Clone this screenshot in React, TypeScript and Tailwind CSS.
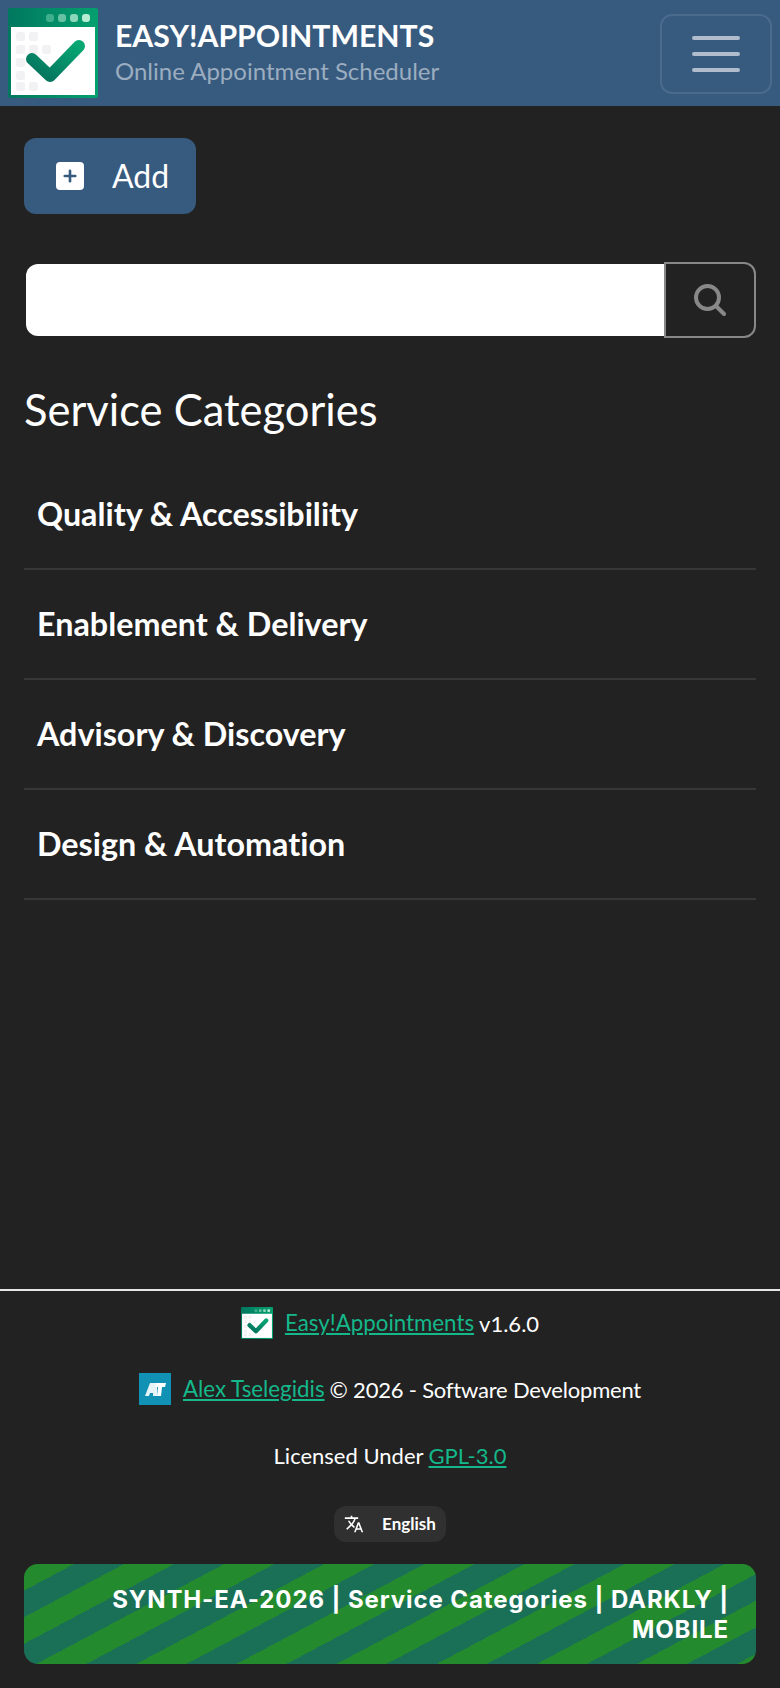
import { Plus } from "lucide-react";
import { MdTranslate } from "react-icons/md";

const categories = [
  "Quality & Accessibility",
  "Enablement & Delivery",
  "Advisory & Discovery",
  "Design & Automation",
];

function Logo({ className, id }: { className: string; id: string }) {
  return (
    <svg viewBox="0 0 90 90" className={className}>
      <defs>
        <linearGradient id={`${id}Bar`} x1="0" y1="0" x2="1" y2="0">
          <stop offset="0" stopColor="#00785f" />
          <stop offset="1" stopColor="#05a06f" />
        </linearGradient>
        <linearGradient id={`${id}Check`} x1="0" y1="1" x2="1" y2="0">
          <stop offset="0" stopColor="#04705c" />
          <stop offset="1" stopColor="#07a673" />
        </linearGradient>
      </defs>
      <rect width="90" height="90" rx="2" fill={`url(#${id}Bar)`} />
      <rect x="3" y="19" width="84" height="68" fill="#ffffff" />
      <g fill="#f2f2f4">
        <rect x="8" y="24" width="9" height="9" rx="2" />
        <rect x="21" y="24" width="9" height="9" rx="2" />
        <rect x="8" y="37" width="9" height="9" rx="2" />
        <rect x="21" y="37" width="9" height="9" rx="2" />
        <rect x="34" y="37" width="9" height="9" rx="2" />
        <rect x="8" y="50" width="9" height="9" rx="2" />
        <rect x="8" y="63" width="9" height="9" rx="2" />
        <rect x="8" y="74" width="9" height="9" rx="2" />
        <rect x="21" y="74" width="9" height="9" rx="2" />
      </g>
      <g>
        <rect x="38" y="6" width="8" height="8" rx="3" fill="#3fae8c" />
        <rect x="50" y="6" width="8" height="8" rx="3" fill="#66c2a3" />
        <rect x="62" y="6" width="8" height="8" rx="3" fill="#8cd6ba" />
        <rect x="74" y="6" width="8" height="8" rx="3" fill="#b5ecd2" />
      </g>
      <path
        d="M24 51 L42 68 L71 38"
        fill="none"
        stroke={`url(#${id}Check)`}
        strokeWidth="12"
        strokeLinecap="round"
        strokeLinejoin="round"
      />
    </svg>
  );
}

function AuthorMark() {
  return (
    <span className="flex h-8 w-8 items-center justify-center bg-[#1191b3]">
      <svg viewBox="0 0 32 32" className="h-8 w-8">
        <path d="M6 23 L11 10 H18 V23 H14 V20 H11 L10 23 Z" fill="#e6f4f8" />
        <path d="M17 10 H27 L26 14 H23 L22 23 H18 L19 14 H16 Z" fill="#ffffff" />
      </svg>
    </span>
  );
}

export default function App() {
  return (
    <div className="relative flex h-[1688px] flex-col overflow-hidden bg-[#222222] font-['Lato','Noto_Sans',sans-serif] text-white [font-variant-ligatures:no-common-ligatures]">
      <header className="flex h-[106px] items-center justify-between bg-[#375a7f] pl-2 pr-2">
        <div className="flex items-center">
          <Logo id="top" className="h-[90px] w-[90px]" />
          <div className="ml-[17px]">
            <div className="text-[30.2px] leading-[34px] font-bold">EASY!APPOINTMENTS</div>
            <div className="mt-[1px] text-[24px] leading-[36px] text-[#9badbf]">Online Appointment Scheduler</div>
          </div>
        </div>
        <button className="mt-[2px] flex h-[80px] w-[112px] flex-col items-center justify-center gap-[12px] rounded-[12px] border-2 border-white/10">
          <span className="h-[4px] w-[48px] rounded bg-[#afbdcc]" />
          <span className="h-[4px] w-[48px] rounded bg-[#afbdcc]" />
          <span className="h-[4px] w-[48px] rounded bg-[#afbdcc]" />
        </button>
      </header>

      <main className="flex-1 px-6">
        <button className="mt-8 flex h-[76px] w-[172px] items-center rounded-[12px] bg-[#375a7f] pl-8">
          <span className="flex h-7 w-7 items-center justify-center rounded-[4px] bg-white">
            <Plus className="h-[18px] w-[18px] text-[#375a7f]" strokeWidth={3.5} />
          </span>
          <span className="ml-7 text-[32px] leading-none">Add</span>
        </button>

        <div className="mt-12 flex items-center pl-[2px]">
          <div className="h-[72px] flex-1 rounded-l-[12px] bg-white" />
          <button className="flex h-[76px] w-[92px] items-center justify-center rounded-r-[12px] border-2 border-[#888888]">
            <svg viewBox="0 0 32 32" className="h-8 w-8" fill="none" stroke="#888888" strokeWidth="4" strokeLinecap="round">
              <circle cx="13.5" cy="13.5" r="11.5" />
              <path d="M22 22 L30 30" />
            </svg>
          </button>
        </div>

        <h1 className="mt-[47px] text-[43.5px] leading-[48px]">Service Categories</h1>

        <ul className="mt-[27px]">
          {categories.map((name) => (
            <li key={name} className="flex h-[110px] items-center border-b-2 border-[#373737] pl-[13px] pr-[14px]">
              <span className="text-[32.3px] font-bold">{name}</span>
            </li>
          ))}
        </ul>
      </main>

      <footer className="flex h-[399px] flex-col items-center border-t-2 border-[#e6e6e6] text-[22px]">
        <div className="mt-[16px] flex h-8 items-center">
          <Logo id="small" className="mr-[12px] h-8 w-8" />
          <a className="text-[22.3px] text-[#14b88a] underline">Easy!Appointments</a>
          <span className="ml-[5px]">v1.6.0</span>
        </div>
        <div className="mt-[34px] flex h-8 items-center">
          <span className="mr-[12px]"><AuthorMark /></span>
          <a className="text-[22.3px] text-[#14b88a] underline">Alex Tselegidis</a>
          <span className="ml-[5px] tracking-[-0.2px]">© 2026 - Software Development</span>
        </div>
        <div className="mt-[34px] flex h-8 items-center">
          <span>Licensed Under</span>
          <a className="ml-[5px] text-[#14b88a] underline">GPL-3.0</a>
        </div>
        <div className="mt-[35px] flex h-[36px] w-[112px] items-center justify-center rounded-[12px] bg-[#303030] text-[17px] font-bold">
          <MdTranslate className="mr-[18px] h-5 w-5" />
          English
        </div>
      </footer>

      <div className="absolute top-[1564px] left-6 flex h-[100px] w-[732px] items-center justify-end rounded-[14px] bg-[repeating-linear-gradient(152deg,#238b2d_0px,#238b2d_23.5px,#1a7057_23.5px,#1a7057_47px)] pt-[2px] pr-[27px] pl-[29px] text-right font-['Inter',sans-serif] text-[24px] leading-[30px] font-bold tracking-[0.9px]">
        <div>SYNTH-EA-2026 | Service Categories | DARKLY | MOBILE</div>
      </div>
    </div>
  );
}
